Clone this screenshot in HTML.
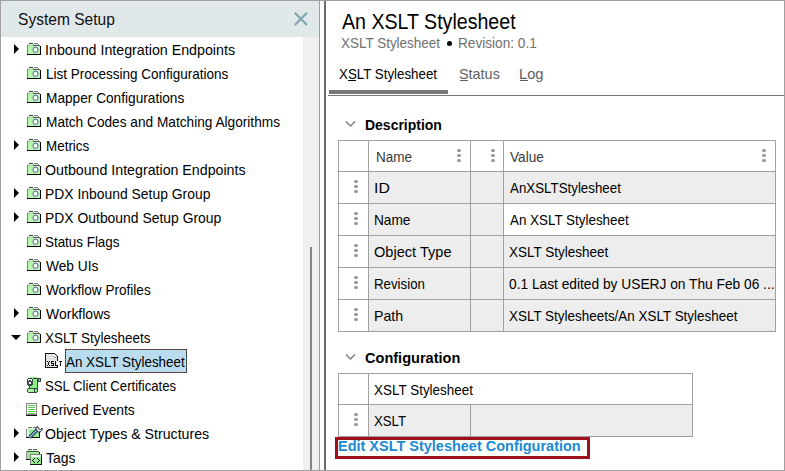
<!DOCTYPE html>
<html><head><meta charset="utf-8"><style>
html,body{margin:0;padding:0;}
body{width:785px;height:471px;position:relative;overflow:hidden;background:#fff;font-family:"Liberation Sans",sans-serif;}
.t{position:absolute;white-space:pre;line-height:1;transform-origin:0 0;}
.r{position:absolute;}
</style></head><body>
<div class="r" style="left:0px;top:0px;width:785px;height:1px;background:#a0a0a0;"></div>
<div class="r" style="left:0px;top:0px;width:1px;height:471px;background:#a0a0a0;"></div>
<div class="r" style="left:784px;top:0px;width:1px;height:471px;background:#a0a0a0;"></div>
<div class="r" style="left:0px;top:470px;width:785px;height:1px;background:#a0a0a0;"></div>
<div class="r" style="left:1px;top:1px;width:318px;height:36px;background:#e0e8ea;"></div>
<div class="t" style="left:17.98px;top:10.63px;font-size:17px;color:#111;font-weight:normal;transform:scaleX(0.9152)">System Setup</div>
<svg class="r" style="left:293px;top:11px" width="16" height="16" viewBox="0 0 16 16"><path d="M1.8 1.8L14 14M14 1.8L1.8 14" stroke="#7ea5ad" stroke-width="2.1"/></svg>
<div class="r" style="left:319px;top:1px;width:1px;height:469px;background:#80a9b3;"></div>
<div class="r" style="left:303px;top:37px;width:16px;height:433px;background:#f0f0f0;"></div>
<div class="r" style="left:310px;top:247px;width:2px;height:223px;background:#858585;"></div>
<div class="r" style="left:324px;top:1px;width:2px;height:469px;background:#6b6b6b;"></div>
<svg class="r" style="left:14px;top:44px" width="5" height="10" viewBox="0 0 5 10"><path d="M0 0L5 5L0 10Z" fill="#000"/></svg>
<svg class="r" style="left:27px;top:43px" width="14" height="12" viewBox="0 0 14 12" shape-rendering="crispEdges"><rect x="2" y="0" width="4" height="1" fill="#3c3c3c"/><rect x="7" y="0" width="4" height="1" fill="#8a7a98"/><rect x="1" y="1" width="1" height="1" fill="#b088c0"/><rect x="6" y="1" width="1" height="1" fill="#b088c0"/><rect x="11" y="1" width="1" height="1" fill="#b088c0"/><rect x="2" y="1" width="4" height="1" fill="#e4f8e0"/><rect x="7" y="1" width="4" height="1" fill="#c4f2bc"/><rect x="0" y="2" width="1" height="1" fill="#806880"/><rect x="1" y="2" width="5" height="1" fill="#98e898"/><rect x="6" y="2" width="7" height="1" fill="#6a6070"/><rect x="0" y="3" width="1" height="8" fill="#9070a0"/><rect x="1" y="3" width="12" height="8" fill="#b8f4b0"/><rect x="13" y="3" width="1" height="9" fill="#000"/><rect x="0" y="11" width="14" height="1" fill="#000"/><circle cx="8.5" cy="6.8" r="2.6" fill="#e8fcee" stroke="#6a58a0" stroke-width="1" shape-rendering="auto"/></svg>
<div class="t" style="left:44.61px;top:42.75px;font-size:14.5px;color:#000;font-weight:normal;transform:scaleX(0.9821)">Inbound Integration Endpoints</div>
<svg class="r" style="left:27px;top:67px" width="14" height="12" viewBox="0 0 14 12" shape-rendering="crispEdges"><rect x="2" y="0" width="4" height="1" fill="#3c3c3c"/><rect x="7" y="0" width="4" height="1" fill="#8a7a98"/><rect x="1" y="1" width="1" height="1" fill="#b088c0"/><rect x="6" y="1" width="1" height="1" fill="#b088c0"/><rect x="11" y="1" width="1" height="1" fill="#b088c0"/><rect x="2" y="1" width="4" height="1" fill="#e4f8e0"/><rect x="7" y="1" width="4" height="1" fill="#c4f2bc"/><rect x="0" y="2" width="1" height="1" fill="#806880"/><rect x="1" y="2" width="5" height="1" fill="#98e898"/><rect x="6" y="2" width="7" height="1" fill="#6a6070"/><rect x="0" y="3" width="1" height="8" fill="#9070a0"/><rect x="1" y="3" width="12" height="8" fill="#b8f4b0"/><rect x="13" y="3" width="1" height="9" fill="#000"/><rect x="0" y="11" width="14" height="1" fill="#000"/><circle cx="8.5" cy="6.8" r="2.6" fill="#e8fcee" stroke="#6a58a0" stroke-width="1" shape-rendering="auto"/></svg>
<div class="t" style="left:45.52px;top:66.75px;font-size:14.5px;color:#000;font-weight:normal;transform:scaleX(0.9312)">List Processing Configurations</div>
<svg class="r" style="left:27px;top:91px" width="14" height="12" viewBox="0 0 14 12" shape-rendering="crispEdges"><rect x="2" y="0" width="4" height="1" fill="#3c3c3c"/><rect x="7" y="0" width="4" height="1" fill="#8a7a98"/><rect x="1" y="1" width="1" height="1" fill="#b088c0"/><rect x="6" y="1" width="1" height="1" fill="#b088c0"/><rect x="11" y="1" width="1" height="1" fill="#b088c0"/><rect x="2" y="1" width="4" height="1" fill="#e4f8e0"/><rect x="7" y="1" width="4" height="1" fill="#c4f2bc"/><rect x="0" y="2" width="1" height="1" fill="#806880"/><rect x="1" y="2" width="5" height="1" fill="#98e898"/><rect x="6" y="2" width="7" height="1" fill="#6a6070"/><rect x="0" y="3" width="1" height="8" fill="#9070a0"/><rect x="1" y="3" width="12" height="8" fill="#b8f4b0"/><rect x="13" y="3" width="1" height="9" fill="#000"/><rect x="0" y="11" width="14" height="1" fill="#000"/><circle cx="8.5" cy="6.8" r="2.6" fill="#e8fcee" stroke="#6a58a0" stroke-width="1" shape-rendering="auto"/></svg>
<div class="t" style="left:45.51px;top:90.75px;font-size:14.5px;color:#000;font-weight:normal;transform:scaleX(0.9425)">Mapper Configurations</div>
<svg class="r" style="left:27px;top:115px" width="14" height="12" viewBox="0 0 14 12" shape-rendering="crispEdges"><rect x="2" y="0" width="4" height="1" fill="#3c3c3c"/><rect x="7" y="0" width="4" height="1" fill="#8a7a98"/><rect x="1" y="1" width="1" height="1" fill="#b088c0"/><rect x="6" y="1" width="1" height="1" fill="#b088c0"/><rect x="11" y="1" width="1" height="1" fill="#b088c0"/><rect x="2" y="1" width="4" height="1" fill="#e4f8e0"/><rect x="7" y="1" width="4" height="1" fill="#c4f2bc"/><rect x="0" y="2" width="1" height="1" fill="#806880"/><rect x="1" y="2" width="5" height="1" fill="#98e898"/><rect x="6" y="2" width="7" height="1" fill="#6a6070"/><rect x="0" y="3" width="1" height="8" fill="#9070a0"/><rect x="1" y="3" width="12" height="8" fill="#b8f4b0"/><rect x="13" y="3" width="1" height="9" fill="#000"/><rect x="0" y="11" width="14" height="1" fill="#000"/><circle cx="8.5" cy="6.8" r="2.6" fill="#e8fcee" stroke="#6a58a0" stroke-width="1" shape-rendering="auto"/></svg>
<div class="t" style="left:45.51px;top:114.75px;font-size:14.5px;color:#000;font-weight:normal;transform:scaleX(0.9426)">Match Codes and Matching Algorithms</div>
<svg class="r" style="left:14px;top:140px" width="5" height="10" viewBox="0 0 5 10"><path d="M0 0L5 5L0 10Z" fill="#000"/></svg>
<svg class="r" style="left:27px;top:139px" width="14" height="12" viewBox="0 0 14 12" shape-rendering="crispEdges"><rect x="2" y="0" width="4" height="1" fill="#3c3c3c"/><rect x="7" y="0" width="4" height="1" fill="#8a7a98"/><rect x="1" y="1" width="1" height="1" fill="#b088c0"/><rect x="6" y="1" width="1" height="1" fill="#b088c0"/><rect x="11" y="1" width="1" height="1" fill="#b088c0"/><rect x="2" y="1" width="4" height="1" fill="#e4f8e0"/><rect x="7" y="1" width="4" height="1" fill="#c4f2bc"/><rect x="0" y="2" width="1" height="1" fill="#806880"/><rect x="1" y="2" width="5" height="1" fill="#98e898"/><rect x="6" y="2" width="7" height="1" fill="#6a6070"/><rect x="0" y="3" width="1" height="8" fill="#9070a0"/><rect x="1" y="3" width="12" height="8" fill="#b8f4b0"/><rect x="13" y="3" width="1" height="9" fill="#000"/><rect x="0" y="11" width="14" height="1" fill="#000"/><circle cx="8.5" cy="6.8" r="2.6" fill="#e8fcee" stroke="#6a58a0" stroke-width="1" shape-rendering="auto"/></svg>
<div class="t" style="left:45.53px;top:138.75px;font-size:14.5px;color:#000;font-weight:normal;transform:scaleX(0.9258)">Metrics</div>
<svg class="r" style="left:27px;top:163px" width="14" height="12" viewBox="0 0 14 12" shape-rendering="crispEdges"><rect x="2" y="0" width="4" height="1" fill="#3c3c3c"/><rect x="7" y="0" width="4" height="1" fill="#8a7a98"/><rect x="1" y="1" width="1" height="1" fill="#b088c0"/><rect x="6" y="1" width="1" height="1" fill="#b088c0"/><rect x="11" y="1" width="1" height="1" fill="#b088c0"/><rect x="2" y="1" width="4" height="1" fill="#e4f8e0"/><rect x="7" y="1" width="4" height="1" fill="#c4f2bc"/><rect x="0" y="2" width="1" height="1" fill="#806880"/><rect x="1" y="2" width="5" height="1" fill="#98e898"/><rect x="6" y="2" width="7" height="1" fill="#6a6070"/><rect x="0" y="3" width="1" height="8" fill="#9070a0"/><rect x="1" y="3" width="12" height="8" fill="#b8f4b0"/><rect x="13" y="3" width="1" height="9" fill="#000"/><rect x="0" y="11" width="14" height="1" fill="#000"/><circle cx="8.5" cy="6.8" r="2.6" fill="#e8fcee" stroke="#6a58a0" stroke-width="1" shape-rendering="auto"/></svg>
<div class="t" style="left:45.34px;top:162.75px;font-size:14.5px;color:#000;font-weight:normal;transform:scaleX(0.9793)">Outbound Integration Endpoints</div>
<svg class="r" style="left:14px;top:188px" width="5" height="10" viewBox="0 0 5 10"><path d="M0 0L5 5L0 10Z" fill="#000"/></svg>
<svg class="r" style="left:27px;top:187px" width="14" height="12" viewBox="0 0 14 12" shape-rendering="crispEdges"><rect x="2" y="0" width="4" height="1" fill="#3c3c3c"/><rect x="7" y="0" width="4" height="1" fill="#8a7a98"/><rect x="1" y="1" width="1" height="1" fill="#b088c0"/><rect x="6" y="1" width="1" height="1" fill="#b088c0"/><rect x="11" y="1" width="1" height="1" fill="#b088c0"/><rect x="2" y="1" width="4" height="1" fill="#e4f8e0"/><rect x="7" y="1" width="4" height="1" fill="#c4f2bc"/><rect x="0" y="2" width="1" height="1" fill="#806880"/><rect x="1" y="2" width="5" height="1" fill="#98e898"/><rect x="6" y="2" width="7" height="1" fill="#6a6070"/><rect x="0" y="3" width="1" height="8" fill="#9070a0"/><rect x="1" y="3" width="12" height="8" fill="#b8f4b0"/><rect x="13" y="3" width="1" height="9" fill="#000"/><rect x="0" y="11" width="14" height="1" fill="#000"/><circle cx="8.5" cy="6.8" r="2.6" fill="#e8fcee" stroke="#6a58a0" stroke-width="1" shape-rendering="auto"/></svg>
<div class="t" style="left:45.19px;top:186.75px;font-size:14.5px;color:#000;font-weight:normal;transform:scaleX(0.9591)">PDX Inbound Setup Group</div>
<svg class="r" style="left:14px;top:212px" width="5" height="10" viewBox="0 0 5 10"><path d="M0 0L5 5L0 10Z" fill="#000"/></svg>
<svg class="r" style="left:27px;top:211px" width="14" height="12" viewBox="0 0 14 12" shape-rendering="crispEdges"><rect x="2" y="0" width="4" height="1" fill="#3c3c3c"/><rect x="7" y="0" width="4" height="1" fill="#8a7a98"/><rect x="1" y="1" width="1" height="1" fill="#b088c0"/><rect x="6" y="1" width="1" height="1" fill="#b088c0"/><rect x="11" y="1" width="1" height="1" fill="#b088c0"/><rect x="2" y="1" width="4" height="1" fill="#e4f8e0"/><rect x="7" y="1" width="4" height="1" fill="#c4f2bc"/><rect x="0" y="2" width="1" height="1" fill="#806880"/><rect x="1" y="2" width="5" height="1" fill="#98e898"/><rect x="6" y="2" width="7" height="1" fill="#6a6070"/><rect x="0" y="3" width="1" height="8" fill="#9070a0"/><rect x="1" y="3" width="12" height="8" fill="#b8f4b0"/><rect x="13" y="3" width="1" height="9" fill="#000"/><rect x="0" y="11" width="14" height="1" fill="#000"/><circle cx="8.5" cy="6.8" r="2.6" fill="#e8fcee" stroke="#6a58a0" stroke-width="1" shape-rendering="auto"/></svg>
<div class="t" style="left:45.19px;top:210.75px;font-size:14.5px;color:#000;font-weight:normal;transform:scaleX(0.9592)">PDX Outbound Setup Group</div>
<svg class="r" style="left:27px;top:235px" width="14" height="12" viewBox="0 0 14 12" shape-rendering="crispEdges"><rect x="2" y="0" width="4" height="1" fill="#3c3c3c"/><rect x="7" y="0" width="4" height="1" fill="#8a7a98"/><rect x="1" y="1" width="1" height="1" fill="#b088c0"/><rect x="6" y="1" width="1" height="1" fill="#b088c0"/><rect x="11" y="1" width="1" height="1" fill="#b088c0"/><rect x="2" y="1" width="4" height="1" fill="#e4f8e0"/><rect x="7" y="1" width="4" height="1" fill="#c4f2bc"/><rect x="0" y="2" width="1" height="1" fill="#806880"/><rect x="1" y="2" width="5" height="1" fill="#98e898"/><rect x="6" y="2" width="7" height="1" fill="#6a6070"/><rect x="0" y="3" width="1" height="8" fill="#9070a0"/><rect x="1" y="3" width="12" height="8" fill="#b8f4b0"/><rect x="13" y="3" width="1" height="9" fill="#000"/><rect x="0" y="11" width="14" height="1" fill="#000"/><circle cx="8.5" cy="6.8" r="2.6" fill="#e8fcee" stroke="#6a58a0" stroke-width="1" shape-rendering="auto"/></svg>
<div class="t" style="left:45.25px;top:234.75px;font-size:14.5px;color:#000;font-weight:normal;transform:scaleX(0.9238)">Status Flags</div>
<svg class="r" style="left:27px;top:259px" width="14" height="12" viewBox="0 0 14 12" shape-rendering="crispEdges"><rect x="2" y="0" width="4" height="1" fill="#3c3c3c"/><rect x="7" y="0" width="4" height="1" fill="#8a7a98"/><rect x="1" y="1" width="1" height="1" fill="#b088c0"/><rect x="6" y="1" width="1" height="1" fill="#b088c0"/><rect x="11" y="1" width="1" height="1" fill="#b088c0"/><rect x="2" y="1" width="4" height="1" fill="#e4f8e0"/><rect x="7" y="1" width="4" height="1" fill="#c4f2bc"/><rect x="0" y="2" width="1" height="1" fill="#806880"/><rect x="1" y="2" width="5" height="1" fill="#98e898"/><rect x="6" y="2" width="7" height="1" fill="#6a6070"/><rect x="0" y="3" width="1" height="8" fill="#9070a0"/><rect x="1" y="3" width="12" height="8" fill="#b8f4b0"/><rect x="13" y="3" width="1" height="9" fill="#000"/><rect x="0" y="11" width="14" height="1" fill="#000"/><circle cx="8.5" cy="6.8" r="2.6" fill="#e8fcee" stroke="#6a58a0" stroke-width="1" shape-rendering="auto"/></svg>
<div class="t" style="left:46.12px;top:258.75px;font-size:14.5px;color:#000;font-weight:normal;transform:scaleX(0.9482)">Web UIs</div>
<svg class="r" style="left:27px;top:283px" width="14" height="12" viewBox="0 0 14 12" shape-rendering="crispEdges"><rect x="2" y="0" width="4" height="1" fill="#3c3c3c"/><rect x="7" y="0" width="4" height="1" fill="#8a7a98"/><rect x="1" y="1" width="1" height="1" fill="#b088c0"/><rect x="6" y="1" width="1" height="1" fill="#b088c0"/><rect x="11" y="1" width="1" height="1" fill="#b088c0"/><rect x="2" y="1" width="4" height="1" fill="#e4f8e0"/><rect x="7" y="1" width="4" height="1" fill="#c4f2bc"/><rect x="0" y="2" width="1" height="1" fill="#806880"/><rect x="1" y="2" width="5" height="1" fill="#98e898"/><rect x="6" y="2" width="7" height="1" fill="#6a6070"/><rect x="0" y="3" width="1" height="8" fill="#9070a0"/><rect x="1" y="3" width="12" height="8" fill="#b8f4b0"/><rect x="13" y="3" width="1" height="9" fill="#000"/><rect x="0" y="11" width="14" height="1" fill="#000"/><circle cx="8.5" cy="6.8" r="2.6" fill="#e8fcee" stroke="#6a58a0" stroke-width="1" shape-rendering="auto"/></svg>
<div class="t" style="left:46.13px;top:282.75px;font-size:14.5px;color:#000;font-weight:normal;transform:scaleX(0.9368)">Workflow Profiles</div>
<svg class="r" style="left:14px;top:308px" width="5" height="10" viewBox="0 0 5 10"><path d="M0 0L5 5L0 10Z" fill="#000"/></svg>
<svg class="r" style="left:27px;top:307px" width="14" height="12" viewBox="0 0 14 12" shape-rendering="crispEdges"><rect x="2" y="0" width="4" height="1" fill="#3c3c3c"/><rect x="7" y="0" width="4" height="1" fill="#8a7a98"/><rect x="1" y="1" width="1" height="1" fill="#b088c0"/><rect x="6" y="1" width="1" height="1" fill="#b088c0"/><rect x="11" y="1" width="1" height="1" fill="#b088c0"/><rect x="2" y="1" width="4" height="1" fill="#e4f8e0"/><rect x="7" y="1" width="4" height="1" fill="#c4f2bc"/><rect x="0" y="2" width="1" height="1" fill="#806880"/><rect x="1" y="2" width="5" height="1" fill="#98e898"/><rect x="6" y="2" width="7" height="1" fill="#6a6070"/><rect x="0" y="3" width="1" height="8" fill="#9070a0"/><rect x="1" y="3" width="12" height="8" fill="#b8f4b0"/><rect x="13" y="3" width="1" height="9" fill="#000"/><rect x="0" y="11" width="14" height="1" fill="#000"/><circle cx="8.5" cy="6.8" r="2.6" fill="#e8fcee" stroke="#6a58a0" stroke-width="1" shape-rendering="auto"/></svg>
<div class="t" style="left:46.12px;top:306.75px;font-size:14.5px;color:#000;font-weight:normal;transform:scaleX(0.9643)">Workflows</div>
<svg class="r" style="left:11px;top:335px" width="10" height="5" viewBox="0 0 10 5"><path d="M0 0L10 0L5 5Z" fill="#000"/></svg>
<svg class="r" style="left:27px;top:331px" width="14" height="12" viewBox="0 0 14 12" shape-rendering="crispEdges"><rect x="2" y="0" width="4" height="1" fill="#3c3c3c"/><rect x="7" y="0" width="4" height="1" fill="#8a7a98"/><rect x="1" y="1" width="1" height="1" fill="#b088c0"/><rect x="6" y="1" width="1" height="1" fill="#b088c0"/><rect x="11" y="1" width="1" height="1" fill="#b088c0"/><rect x="2" y="1" width="4" height="1" fill="#e4f8e0"/><rect x="7" y="1" width="4" height="1" fill="#c4f2bc"/><rect x="0" y="2" width="1" height="1" fill="#806880"/><rect x="1" y="2" width="5" height="1" fill="#98e898"/><rect x="6" y="2" width="7" height="1" fill="#6a6070"/><rect x="0" y="3" width="1" height="8" fill="#9070a0"/><rect x="1" y="3" width="12" height="8" fill="#b8f4b0"/><rect x="13" y="3" width="1" height="9" fill="#000"/><rect x="0" y="11" width="14" height="1" fill="#000"/><circle cx="8.5" cy="6.8" r="2.6" fill="#e8fcee" stroke="#6a58a0" stroke-width="1" shape-rendering="auto"/></svg>
<div class="t" style="left:44.99px;top:330.75px;font-size:14.5px;color:#000;font-weight:normal;transform:scaleX(0.9252)">XSLT Stylesheets</div>
<div class="r" style="left:65px;top:349px;width:122px;height:24px;background:#badcef;box-sizing:border-box;border:1px solid #3a7a90;"></div>
<div class="r" style="left:65px;top:349px;width:122px;height:24px;background:transparent;box-sizing:border-box;border:1px dotted #40281a;"></div>
<svg class="r" style="left:44px;top:352px" width="20" height="18" viewBox="44 352 20 18" shape-rendering="crispEdges"><rect x="46" y="354" width="11" height="13" fill="#e2e2e2"/><rect x="53" y="354" width="3" height="3" fill="#ffffff"/><rect x="53" y="356" width="1" height="1" fill="#a0a0a0"/><rect x="54" y="357" width="2" height="1" fill="#a0a0a0"/><rect x="45" y="353" width="1" height="15" fill="#111"/><rect x="45" y="353" width="10" height="1" fill="#111"/><rect x="55" y="354" width="1" height="1" fill="#111"/><rect x="56" y="355" width="1" height="1" fill="#111"/><rect x="57" y="356" width="1" height="5" fill="#111"/><rect x="57" y="365" width="1" height="3" fill="#111"/><rect x="45" y="367" width="13" height="1" fill="#111"/><rect x="47" y="361" width="1" height="1" fill="#111"/><rect x="49" y="361" width="1" height="1" fill="#111"/><rect x="48" y="362" width="1" height="3" fill="#111"/><rect x="47" y="365" width="1" height="1" fill="#111"/><rect x="49" y="365" width="1" height="1" fill="#111"/><rect x="51" y="361" width="3" height="1" fill="#111"/><rect x="51" y="362" width="1" height="1" fill="#111"/><rect x="51" y="363" width="3" height="1" fill="#111"/><rect x="53" y="364" width="1" height="1" fill="#111"/><rect x="51" y="365" width="3" height="1" fill="#111"/><rect x="55" y="361" width="1" height="5" fill="#111"/><rect x="55" y="365" width="3" height="1" fill="#111"/><rect x="59" y="361" width="3" height="1" fill="#111"/><rect x="60" y="362" width="1" height="4" fill="#111"/></svg>
<div class="t" style="left:65.71px;top:354.75px;font-size:14.5px;color:#000;font-weight:normal;transform:scaleX(0.9243)">An XSLT Stylesheet</div>
<svg class="r" style="left:26px;top:377px" width="17" height="17" viewBox="26 377 17 17" shape-rendering="crispEdges"><g transform="translate(0,0)"><rect x="30" y="377" width="7" height="12" fill="#88f080"/><rect x="33" y="378" width="8" height="1" fill="#3c4848"/><rect x="38" y="379" width="1" height="3" fill="#3c4848"/><rect x="40" y="379" width="1" height="2" fill="#3c4848"/><rect x="39" y="381" width="2" height="1" fill="#3c4848"/><rect x="37" y="379" width="1" height="11" fill="#3c4848"/><rect x="39" y="379" width="1" height="2" fill="#90e090"/><rect x="28" y="378" width="4" height="1" fill="#3c4848"/><rect x="27" y="379" width="6" height="6" fill="#3c4848"/><rect x="28" y="385" width="4" height="1" fill="#3c4848"/><rect x="28" y="379" width="4" height="2" fill="#f0f0f0"/><rect x="29" y="380" width="2" height="1" fill="#3c4848"/><rect x="29" y="382" width="2" height="2" fill="#f0f0f0"/><rect x="29" y="386" width="1" height="2" fill="#3c4848"/><rect x="28" y="388" width="9" height="1" fill="#3c4848"/><rect x="27" y="389" width="1" height="3" fill="#3c4848"/><rect x="28" y="392" width="9" height="1" fill="#3c4848"/><rect x="34" y="389" width="1" height="3" fill="#3c4848"/><rect x="37" y="388" width="1" height="4" fill="#3c4848"/><rect x="28" y="389" width="6" height="3" fill="#a8f2a0"/><rect x="35" y="389" width="2" height="3" fill="#78e878"/></g></svg>
<div class="t" style="left:45.27px;top:378.75px;font-size:14.5px;color:#000;font-weight:normal;transform:scaleX(0.9075)">SSL Client Certificates</div>
<svg class="r" style="left:26px;top:403px" width="11" height="13" viewBox="0 0 11 13"><rect x="0.5" y="0.5" width="10" height="11" fill="#fff" stroke="#808080"/><rect x="0" y="12" width="11" height="1" fill="#111"/><rect x="2" y="2" width="7" height="1" fill="#5ac850"/><rect x="2" y="4" width="7" height="1" fill="#5ac850"/><rect x="2" y="6" width="7" height="1" fill="#5ac850"/><rect x="2" y="8" width="7" height="1" fill="#5ac850"/><rect x="2" y="10" width="7" height="1" fill="#5ac850"/></svg>
<div class="t" style="left:40.79px;top:402.75px;font-size:14.5px;color:#000;font-weight:normal;transform:scaleX(0.9539)">Derived Events</div>
<svg class="r" style="left:14px;top:428px" width="5" height="10" viewBox="0 0 5 10"><path d="M0 0L5 5L0 10Z" fill="#000"/></svg>
<svg class="r" style="left:24px;top:424px" width="20" height="18" viewBox="24 424 20 18" shape-rendering="crispEdges"><rect x="28" y="427" width="4" height="1" fill="#707070"/><rect x="33" y="427" width="4" height="1" fill="#707070"/><rect x="27" y="428" width="11" height="1" fill="#e8f8e0"/><rect x="26" y="429" width="1" height="8" fill="#909090"/><rect x="27" y="429" width="12" height="8" fill="#90e890"/><rect x="27" y="429" width="2" height="8" fill="#e8f8e8"/><rect x="27" y="429" width="12" height="1" fill="#b8f0b0"/><rect x="39" y="430" width="1" height="8" fill="#111"/><rect x="26" y="437" width="14" height="1" fill="#111"/><g shape-rendering="auto"><path d="M29.5 437.5L38 429" stroke="#203040" stroke-width="3.2"/><path d="M29.5 437.5L38 429" stroke="#88c0f0" stroke-width="1.5"/><path d="M36.5 430.5A3 3 0 0 1 37.5 426.2L38.5 428.5L40.5 429.5L42 428A3 3 0 0 1 38.5 432Z" fill="#e0e8f0" stroke="#202830" stroke-width="1"/></g></svg>
<div class="t" style="left:45.34px;top:426.75px;font-size:14.5px;color:#000;font-weight:normal;transform:scaleX(0.9758)">Object Types &amp; Structures</div>
<svg class="r" style="left:14px;top:452px" width="5" height="10" viewBox="0 0 5 10"><path d="M0 0L5 5L0 10Z" fill="#000"/></svg>
<svg class="r" style="left:24px;top:446px" width="20" height="20" viewBox="24 446 20 20" shape-rendering="crispEdges"><rect x="28" y="449" width="4" height="1" fill="#707070"/><rect x="33" y="449" width="4" height="1" fill="#707070"/><rect x="28" y="450" width="4" height="1" fill="#b0f0a8"/><rect x="33" y="450" width="4" height="1" fill="#b0f0a8"/><rect x="27" y="451" width="12" height="1" fill="#505050"/><rect x="26" y="451" width="1" height="9" fill="#909090"/><rect x="27" y="452" width="12" height="7" fill="#98e890"/><rect x="39" y="452" width="1" height="3" fill="#111"/><rect x="26" y="459" width="4" height="1" fill="#111"/><rect x="30" y="454" width="12" height="1" fill="#808080"/><rect x="30" y="454" width="1" height="10" fill="#808080"/><rect x="31" y="455" width="10" height="2" fill="#f4f4f4"/><rect x="31" y="457" width="10" height="7" fill="#98e890"/><rect x="41" y="455" width="1" height="10" fill="#111"/><rect x="30" y="464" width="12" height="1" fill="#111"/><rect x="34" y="458" width="1" height="1" fill="#111"/><rect x="33" y="459" width="1" height="1" fill="#111"/><rect x="32" y="460" width="1" height="1" fill="#111"/><rect x="33" y="461" width="1" height="1" fill="#111"/><rect x="34" y="462" width="1" height="1" fill="#111"/><rect x="37" y="458" width="1" height="1" fill="#111"/><rect x="38" y="459" width="1" height="1" fill="#111"/><rect x="39" y="460" width="1" height="1" fill="#111"/><rect x="38" y="461" width="1" height="1" fill="#111"/><rect x="37" y="462" width="1" height="1" fill="#111"/></svg>
<div class="t" style="left:46.33px;top:450.75px;font-size:14.5px;color:#000;font-weight:normal;transform:scaleX(0.9595)">Tags</div>
<div class="t" style="left:341.71px;top:10.75px;font-size:21.6px;color:#000;font-weight:normal;transform:scaleX(0.9078)">An XSLT Stylesheet</div>
<div class="t" style="left:340.98px;top:35.75px;font-size:14.5px;color:#707070;font-weight:normal;transform:scaleX(0.9283)">XSLT Stylesheet</div>
<div class="r" style="left:447px;top:41px;width:5px;height:5px;background:#000;border-radius:50%;"></div>
<div class="t" style="left:457.61px;top:35.75px;font-size:14.5px;color:#707070;font-weight:normal;transform:scaleX(0.9401)">Revision: 0.1</div>
<div class="t" style="left:338.99px;top:66.75px;font-size:14.5px;color:#000;font-weight:normal;transform:scaleX(0.9188)">XSLT Stylesheet</div>
<div class="r" style="left:348px;top:80px;width:8px;height:1px;background:#000;"></div>
<div class="t" style="left:458.77px;top:66.75px;font-size:14.5px;color:#606060;font-weight:normal;transform:scaleX(0.9934)">Status</div>
<div class="r" style="left:460px;top:80px;width:8px;height:1px;background:#606060;"></div>
<div class="t" style="left:519.12px;top:66.75px;font-size:14.5px;color:#606060;font-weight:normal;transform:scaleX(1.0132)">Log</div>
<div class="r" style="left:520px;top:80px;width:8px;height:1px;background:#606060;"></div>
<div class="r" style="left:329px;top:90px;width:119px;height:4px;background:#777;"></div>
<div class="r" style="left:328px;top:95px;width:456px;height:1px;background:#777;"></div>
<svg class="r" style="left:345px;top:121px" width="12" height="7" viewBox="0 0 12 7"><path d="M1 0.5L5.5 5L10 0.5" fill="none" stroke="#808080" stroke-width="1.5"/></svg>
<div class="t" style="left:364.92px;top:117.75px;font-size:14.5px;color:#000;font-weight:bold;transform:scaleX(0.9641)">Description</div>
<div class="r" style="left:338px;top:140px;width:438px;height:192px;background:#fff;"></div>
<div class="r" style="left:369px;top:172px;width:101px;height:31px;background:#ededed;"></div>
<div class="r" style="left:471px;top:172px;width:32px;height:31px;background:#ededed;"></div>
<div class="r" style="left:504px;top:172px;width:271px;height:31px;background:#ededed;"></div>
<div class="r" style="left:369px;top:204px;width:101px;height:31px;background:#ededed;"></div>
<div class="r" style="left:471px;top:204px;width:32px;height:31px;background:#ededed;"></div>
<div class="r" style="left:369px;top:236px;width:101px;height:31px;background:#ededed;"></div>
<div class="r" style="left:471px;top:236px;width:32px;height:31px;background:#ededed;"></div>
<div class="r" style="left:504px;top:236px;width:271px;height:31px;background:#ededed;"></div>
<div class="r" style="left:369px;top:268px;width:101px;height:31px;background:#ededed;"></div>
<div class="r" style="left:471px;top:268px;width:32px;height:31px;background:#ededed;"></div>
<div class="r" style="left:504px;top:268px;width:271px;height:31px;background:#ededed;"></div>
<div class="r" style="left:369px;top:300px;width:101px;height:31px;background:#ededed;"></div>
<div class="r" style="left:471px;top:300px;width:32px;height:31px;background:#ededed;"></div>
<div class="r" style="left:504px;top:300px;width:271px;height:31px;background:#ededed;"></div>
<div class="r" style="left:338px;top:140px;width:438px;height:1px;background:#a0a0a0;"></div>
<div class="r" style="left:338px;top:171px;width:438px;height:1px;background:#a0a0a0;"></div>
<div class="r" style="left:338px;top:203px;width:438px;height:1px;background:#a0a0a0;"></div>
<div class="r" style="left:338px;top:235px;width:438px;height:1px;background:#a0a0a0;"></div>
<div class="r" style="left:338px;top:267px;width:438px;height:1px;background:#a0a0a0;"></div>
<div class="r" style="left:338px;top:299px;width:438px;height:1px;background:#a0a0a0;"></div>
<div class="r" style="left:338px;top:331px;width:438px;height:1px;background:#a0a0a0;"></div>
<div class="r" style="left:338px;top:140px;width:1px;height:192px;background:#a0a0a0;"></div>
<div class="r" style="left:368px;top:140px;width:1px;height:192px;background:#a0a0a0;"></div>
<div class="r" style="left:470px;top:140px;width:1px;height:192px;background:#a0a0a0;"></div>
<div class="r" style="left:503px;top:140px;width:1px;height:192px;background:#a0a0a0;"></div>
<div class="r" style="left:775px;top:140px;width:1px;height:192px;background:#a0a0a0;"></div>
<div class="t" style="left:375.52px;top:149.75px;font-size:14.5px;color:#3a3a3a;font-weight:normal;transform:scaleX(0.9318)">Name</div>
<div class="r" style="left:457.3px;top:148.9px;width:3.4px;height:3.4px;border-radius:50%;background:#999999"></div><div class="r" style="left:457.3px;top:153.9px;width:3.4px;height:3.4px;border-radius:50%;background:#999999"></div><div class="r" style="left:457.3px;top:158.9px;width:3.4px;height:3.4px;border-radius:50%;background:#999999"></div>
<div class="r" style="left:491.3px;top:148.9px;width:3.4px;height:3.4px;border-radius:50%;background:#999999"></div><div class="r" style="left:491.3px;top:153.9px;width:3.4px;height:3.4px;border-radius:50%;background:#999999"></div><div class="r" style="left:491.3px;top:158.9px;width:3.4px;height:3.4px;border-radius:50%;background:#999999"></div>
<div class="t" style="left:510.17px;top:149.75px;font-size:14.5px;color:#3a3a3a;font-weight:normal;transform:scaleX(0.9381)">Value</div>
<div class="r" style="left:762.3px;top:148.9px;width:3.4px;height:3.4px;border-radius:50%;background:#999999"></div><div class="r" style="left:762.3px;top:153.9px;width:3.4px;height:3.4px;border-radius:50%;background:#999999"></div><div class="r" style="left:762.3px;top:158.9px;width:3.4px;height:3.4px;border-radius:50%;background:#999999"></div>
<div class="r" style="left:354.3px;top:179.9px;width:3.4px;height:3.4px;border-radius:50%;background:#999999"></div><div class="r" style="left:354.3px;top:184.9px;width:3.4px;height:3.4px;border-radius:50%;background:#999999"></div><div class="r" style="left:354.3px;top:189.9px;width:3.4px;height:3.4px;border-radius:50%;background:#999999"></div>
<div class="t" style="left:373.96px;top:180.75px;font-size:14.5px;color:#000;font-weight:normal;transform:scaleX(1.0925)">ID</div>
<div class="t" style="left:509.71px;top:180.75px;font-size:14.5px;color:#000;font-weight:normal;transform:scaleX(0.9192)">AnXSLTStylesheet</div>
<div class="r" style="left:354.3px;top:211.9px;width:3.4px;height:3.4px;border-radius:50%;background:#999999"></div><div class="r" style="left:354.3px;top:216.9px;width:3.4px;height:3.4px;border-radius:50%;background:#999999"></div><div class="r" style="left:354.3px;top:221.9px;width:3.4px;height:3.4px;border-radius:50%;background:#999999"></div>
<div class="t" style="left:374.31px;top:212.75px;font-size:14.5px;color:#000;font-weight:normal;transform:scaleX(0.9427)">Name</div>
<div class="t" style="left:509.71px;top:212.75px;font-size:14.5px;color:#000;font-weight:normal;transform:scaleX(0.9243)">An XSLT Stylesheet</div>
<div class="r" style="left:354.3px;top:243.9px;width:3.4px;height:3.4px;border-radius:50%;background:#999999"></div><div class="r" style="left:354.3px;top:248.9px;width:3.4px;height:3.4px;border-radius:50%;background:#999999"></div><div class="r" style="left:354.3px;top:253.9px;width:3.4px;height:3.4px;border-radius:50%;background:#999999"></div>
<div class="t" style="left:374.41px;top:244.75px;font-size:14.5px;color:#000;font-weight:normal;transform:scaleX(1.0052)">Object Type</div>
<div class="t" style="left:508.98px;top:244.75px;font-size:14.5px;color:#000;font-weight:normal;transform:scaleX(0.9302)">XSLT Stylesheet</div>
<div class="r" style="left:354.3px;top:275.9px;width:3.4px;height:3.4px;border-radius:50%;background:#999999"></div><div class="r" style="left:354.3px;top:280.9px;width:3.4px;height:3.4px;border-radius:50%;background:#999999"></div><div class="r" style="left:354.3px;top:285.9px;width:3.4px;height:3.4px;border-radius:50%;background:#999999"></div>
<div class="t" style="left:374.34px;top:276.75px;font-size:14.5px;color:#000;font-weight:normal;transform:scaleX(0.9154)">Revision</div>
<div class="t" style="left:508.93px;top:276.75px;font-size:14.5px;color:#000;font-weight:normal;transform:scaleX(0.9477)">0.1 Last edited by USERJ on Thu Feb 06 ...</div>
<div class="r" style="left:354.3px;top:307.9px;width:3.4px;height:3.4px;border-radius:50%;background:#999999"></div><div class="r" style="left:354.3px;top:312.9px;width:3.4px;height:3.4px;border-radius:50%;background:#999999"></div><div class="r" style="left:354.3px;top:317.9px;width:3.4px;height:3.4px;border-radius:50%;background:#999999"></div>
<div class="t" style="left:374.26px;top:308.75px;font-size:14.5px;color:#000;font-weight:normal;transform:scaleX(0.9764)">Path</div>
<div class="t" style="left:508.99px;top:308.75px;font-size:14.5px;color:#000;font-weight:normal;transform:scaleX(0.9271)">XSLT Stylesheets/An XSLT Stylesheet</div>
<svg class="r" style="left:345px;top:354px" width="12" height="7" viewBox="0 0 12 7"><path d="M1 0.5L5.5 5L10 0.5" fill="none" stroke="#808080" stroke-width="1.5"/></svg>
<div class="t" style="left:364.98px;top:350.75px;font-size:14.5px;color:#000;font-weight:bold;transform:scaleX(1.0025)">Configuration</div>
<div class="r" style="left:338px;top:373px;width:355px;height:64px;background:#fff;"></div>
<div class="r" style="left:369px;top:405px;width:101px;height:31px;background:#ededed;"></div>
<div class="r" style="left:471px;top:405px;width:221px;height:31px;background:#ededed;"></div>
<div class="r" style="left:338px;top:373px;width:355px;height:1px;background:#a0a0a0;"></div>
<div class="r" style="left:338px;top:404px;width:355px;height:1px;background:#a0a0a0;"></div>
<div class="r" style="left:338px;top:436px;width:355px;height:1px;background:#a0a0a0;"></div>
<div class="r" style="left:338px;top:373px;width:1px;height:64px;background:#a0a0a0;"></div>
<div class="r" style="left:368px;top:373px;width:1px;height:64px;background:#a0a0a0;"></div>
<div class="r" style="left:692px;top:373px;width:1px;height:64px;background:#a0a0a0;"></div>
<div class="r" style="left:470px;top:404px;width:1px;height:32px;background:#a0a0a0;"></div>
<div class="t" style="left:373.98px;top:382.75px;font-size:14.5px;color:#000;font-weight:normal;transform:scaleX(0.9283)">XSLT Stylesheet</div>
<div class="r" style="left:354.3px;top:412.9px;width:3.4px;height:3.4px;border-radius:50%;background:#999999"></div><div class="r" style="left:354.3px;top:417.9px;width:3.4px;height:3.4px;border-radius:50%;background:#999999"></div><div class="r" style="left:354.3px;top:422.9px;width:3.4px;height:3.4px;border-radius:50%;background:#999999"></div>
<div class="t" style="left:374.00px;top:413.75px;font-size:14.5px;color:#000;font-weight:normal;transform:scaleX(0.9105)">XSLT</div>
<div class="r" style="left:335px;top:437px;width:255px;height:22px;background:transparent;box-sizing:border-box;border:3px solid #a0101c;"></div>
<div class="t" style="left:337.88px;top:438.75px;font-size:14.5px;color:#1b8ad3;font-weight:bold;transform:scaleX(0.9985)">Edit XSLT Stylesheet Configuration</div>
</body></html>
